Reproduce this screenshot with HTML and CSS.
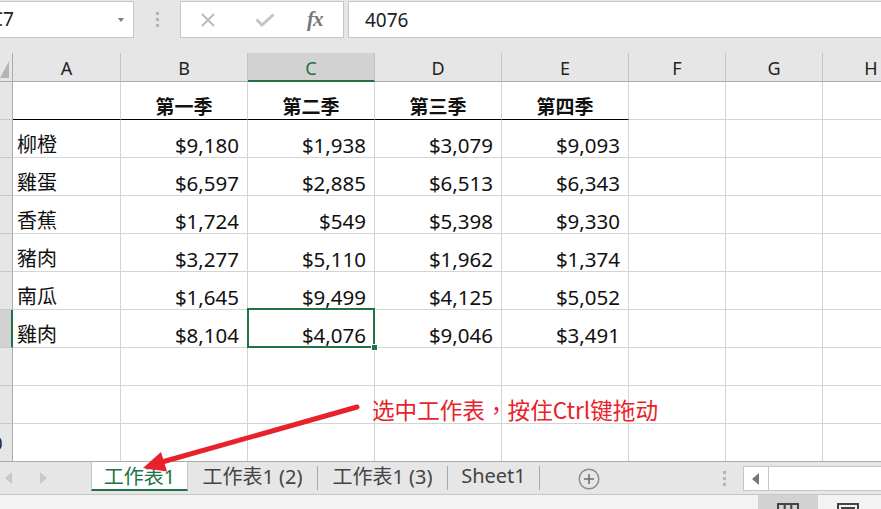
FILE: index.html
```html
<!DOCTYPE html>
<html lang="zh-Hant">
<head>
<meta charset="utf-8">
<title>Excel</title>
<link rel="stylesheet" href="styles.css">
</head>
<body>
<div class="app">
  <div class="formula-bar">
    <div class="namebox"><span class="nb-text">C7</span><span class="nb-caret"></span></div>
    <div class="grip"><i></i><i></i><i></i></div>
    <div class="fb-buttons">
      <svg class="ico-x" width="16" height="16" viewBox="0 0 16 16"><path d="M2 2 L14 14 M14 2 L2 14" stroke="#b9b9b9" stroke-width="1.8" fill="none"/></svg>
      <svg class="ico-check" width="20" height="14" viewBox="0 0 20 14"><path d="M1.5 6.5 L7 12 L18.5 1.5" stroke="#c4c4c4" stroke-width="3" fill="none"/></svg>
      <span class="fx">fx</span>
    </div>
    <div class="fb-input">4076</div>
  </div>

  <div class="sheet">
    <div class="corner"><span class="corner-tri"></span></div>
    <div class="ch">A</div><div class="ch">B</div><div class="ch ch-active">C</div><div class="ch">D</div><div class="ch">E</div><div class="ch">F</div><div class="ch">G</div><div class="ch">H</div>

    <div class="rh"></div>
    <div class="c c-hd"></div><div class="c c-hd c-b">第一季</div><div class="c c-hd c-b">第二季</div><div class="c c-hd c-b">第三季</div><div class="c c-hd c-b">第四季</div><div class="c"></div><div class="c"></div><div class="c"></div>

    <div class="rh"></div>
    <div class="c">柳橙</div><div class="c c-n">$9,180</div><div class="c c-n">$1,938</div><div class="c c-n">$3,079</div><div class="c c-n">$9,093</div><div class="c"></div><div class="c"></div><div class="c"></div>

    <div class="rh"></div>
    <div class="c">雞蛋</div><div class="c c-n">$6,597</div><div class="c c-n">$2,885</div><div class="c c-n">$6,513</div><div class="c c-n">$6,343</div><div class="c"></div><div class="c"></div><div class="c"></div>

    <div class="rh"></div>
    <div class="c">香蕉</div><div class="c c-n">$1,724</div><div class="c c-n">$549</div><div class="c c-n">$5,398</div><div class="c c-n">$9,330</div><div class="c"></div><div class="c"></div><div class="c"></div>

    <div class="rh"></div>
    <div class="c">豬肉</div><div class="c c-n">$3,277</div><div class="c c-n">$5,110</div><div class="c c-n">$1,962</div><div class="c c-n">$1,374</div><div class="c"></div><div class="c"></div><div class="c"></div>

    <div class="rh"></div>
    <div class="c">南瓜</div><div class="c c-n">$1,645</div><div class="c c-n">$9,499</div><div class="c c-n">$4,125</div><div class="c c-n">$5,052</div><div class="c"></div><div class="c"></div><div class="c"></div>

    <div class="rh rh-active"></div>
    <div class="c">雞肉</div><div class="c c-n">$8,104</div><div class="c c-n c-sel">$4,076<span class="sel"><span class="handle"></span></span></div><div class="c c-n">$9,046</div><div class="c c-n">$3,491</div><div class="c"></div><div class="c"></div><div class="c"></div>

    <div class="rh"></div>
    <div class="c"></div><div class="c"></div><div class="c"></div><div class="c"></div><div class="c"></div><div class="c"></div><div class="c"></div><div class="c"></div>

    <div class="rh"></div>
    <div class="c"></div><div class="c"></div><div class="c"></div><div class="c"></div><div class="c"></div><div class="c"></div><div class="c"></div><div class="c"></div>

    <div class="rh"><span class="rh-num">10</span></div>
    <div class="c"></div><div class="c"></div><div class="c"></div><div class="c"></div><div class="c"></div><div class="c"></div><div class="c"></div><div class="c"></div>
  </div>

  <div class="tabbar">
    <div class="tab-nav">
      <svg width="8" height="12" viewBox="0 0 8 12"><path d="M7 0 L0 6 L7 12 Z" fill="#c8c8c8"/></svg>
      <svg width="8" height="12" viewBox="0 0 8 12"><path d="M1 0 L8 6 L1 12 Z" fill="#c8c8c8"/></svg>
    </div>
    <div class="tab tab-active">工作表1</div>
    <div class="tab tab-w">工作表1 (2)</div><span class="tsep"></span>
    <div class="tab tab-w">工作表1 (3)</div><span class="tsep"></span>
    <div class="tab tab-s">Sheet1</div><span class="tsep"></span>
    <div class="add-sheet">
      <svg width="22" height="22" viewBox="0 0 22 22"><circle cx="11" cy="11" r="9.8" stroke="#8a8a8a" stroke-width="1.4" fill="none"/><path d="M11 6 V16 M6 11 H16" stroke="#6e6e6e" stroke-width="1.6"/></svg>
    </div>
    <div class="grip grip-tab"><i></i><i></i><i></i></div>
    <div class="hscroll">
      <div class="hs-btn"><svg width="7" height="12" viewBox="0 0 7 12"><path d="M7 0 L0 6 L7 12 Z" fill="#777"/></svg></div>
    </div>
  </div>

  <div class="statusbar">
    <div class="view-btn view-active">
      <svg width="22" height="14" viewBox="0 0 22 14"><rect x="1" y="1" width="20" height="12" fill="none" stroke="#444" stroke-width="2"/><path d="M7.7 1 V13 M14.3 1 V13 M1 7 H21" stroke="#444" stroke-width="2"/></svg>
    </div>
    <div class="view-btn">
      <svg width="22" height="14" viewBox="0 0 22 14"><rect x="1" y="1" width="20" height="13" fill="none" stroke="#444" stroke-width="2"/><rect x="5" y="5" width="12" height="9" fill="none" stroke="#444" stroke-width="2"/></svg>
    </div>
  </div>

  <div class="annotation">选中工作表，按住Ctrl键拖动</div>
  <svg class="arrow" width="881" height="509" viewBox="0 0 881 509">
    <path d="M357 407 L162 462" stroke="#e8222a" stroke-width="5" stroke-linecap="round" fill="none"/>
    <path d="M143 468 L167 471.5 L161 452 Z" fill="#e8222a"/>
  </svg>
</div>
</body>
</html>
```

FILE: styles.css
```css
* { box-sizing: border-box; }
html, body { margin: 0; padding: 0; }
body {
  width: 881px;
  height: 509px;
  overflow: hidden;
  background: #e6e6e6;
  font-family: "Noto Sans", "Noto Sans CJK TC", sans-serif;
  color: #111;
}
.app {
  position: relative;
  width: 881px;
  height: 509px;
  display: flex;
  flex-direction: column;
  overflow: hidden;
}

/* formula bar */
.formula-bar {
  height: 53px;
  flex: none;
  display: flex;
  align-items: flex-start;
  padding-top: 1px;
  background: #e6e6e6;
}
.namebox {
  width: 150px;
  margin-left: -16px;
  height: 37px;
  background: #fff;
  border: 1px solid #c6c6c6;
  display: flex;
  align-items: center;
  justify-content: space-between;
  padding: 0 9px 0 6px;
  font-size: 19px;
  line-height: 1;
}
.nb-text { color: #222; }
.nb-caret {
  width: 0; height: 0;
  border-left: 3.5px solid transparent;
  border-right: 3.5px solid transparent;
  border-top: 4px solid #7a7a7a;
}
.grip {
  width: 46px;
  height: 37px;
  display: flex;
  flex-direction: column;
  align-items: center;
  justify-content: center;
  gap: 3px;
}
.grip i {
  display: block;
  width: 3px;
  height: 3px;
  background: #b4b4b4;
}
.fb-buttons {
  width: 164px;
  height: 37px;
  background: #fff;
  border: 1px solid #c6c6c6;
  display: flex;
  align-items: center;
  padding-left: 19px;
}
.ico-x { margin-right: 39px; }
.ico-check { margin-right: 32px; margin-top: 1px; }
.fx {
  font-family: "Liberation Serif", serif;
  font-style: italic;
  font-size: 21px;
  color: #777;
  letter-spacing: -1px;
  font-weight: bold;
}
.fb-input {
  margin-left: 4px;
  flex: 1;
  height: 37px;
  background: #fff;
  border: 1px solid #c6c6c6;
  border-right: none;
  display: flex;
  align-items: center;
  padding-left: 16px;
  font-size: 19px;
  color: #222;
}

/* sheet */
.sheet {
  flex: none;
  width: 881px;
  height: 408px;
  overflow: hidden;
  display: grid;
  grid-template-columns: 13px 108px 127px 127px 127px 127px 97px 97px 97px;
  grid-template-rows: 29px repeat(10, 38px);
  background: #fff;
}
.corner {
  background: #e6e6e6;
  border-right: 1px solid #ababab;
  border-bottom: 1px solid #ababab;
  position: relative;
}
.corner-tri {
  position: absolute;
  right: 3px;
  bottom: 3px;
  width: 0; height: 0;
  border-left: 9px solid transparent;
  border-bottom: 17px solid #b4b4b4;
}
.ch {
  background: #e6e6e6;
  border-right: 1px solid #c4c4c4;
  border-bottom: 1px solid #ababab;
  display: flex;
  align-items: center;
  justify-content: center;
  font-size: 18px;
  color: #222;
  padding-top: 1px;
}
.ch-active {
  background: #d2d2d2;
  color: #217346;
  border-bottom: 2px solid #217346;
  padding-top: 2px;
}
.rh {
  background: #e6e6e6;
  border-right: 1px solid #ababab;
  border-bottom: 1px solid #c8c8c8;
  overflow: hidden;
  display: flex;
  align-items: center;
  font-size: 18px;
  color: #222;
}
.rh-active {
  background: #d2d2d2;
  border-right: 2px solid #217346;
}
.rh-num {
  margin-left: -18px;
  white-space: nowrap;
}
.c {
  border-right: 1px solid #d4d4d4;
  border-bottom: 1px solid #d4d4d4;
  display: flex;
  align-items: flex-end;
  padding: 0 4px 0 4px;
  font-size: 20px;
  line-height: 24px;
  white-space: nowrap;
  color: #111;
}
.c-hd { border-bottom-color: #000; }
.c-b {
  justify-content: center;
  font-weight: bold;
  font-size: 19px;
}
.c-n {
  justify-content: flex-end;
  padding-right: 8px;
  font-size: 20.5px;
}
.c-sel { position: relative; }
.sel {
  position: absolute;
  top: -2px;
  left: -1px;
  right: -1px;
  bottom: -1px;
  border: 2px solid #217346;
}
.handle {
  position: absolute;
  right: -5px;
  bottom: -5px;
  width: 7px;
  height: 7px;
  background: #217346;
  border: 1px solid #fff;
}

/* tab bar */
.tabbar {
  flex: none;
  height: 34px;
  border-top: 1px solid #ababab;
  border-bottom: 1px solid #c6c6c6;
  background: #e6e6e6;
  display: flex;
  align-items: flex-start;
}
.tab-nav {
  width: 91px;
  height: 32px;
  display: flex;
  align-items: center;
  padding-left: 5px;
  gap: 26px;
}
.tab {
  height: 29px;
  display: flex;
  align-items: center;
  justify-content: center;
  font-size: 20px;
  color: #444;
  white-space: nowrap;
  font-family: "Noto Sans", "Noto Sans CJK TC", sans-serif;
  padding-bottom: 3px;
}
.tab-active {
  width: 97px;
  background: #fff;
  color: #217346;
  border-left: 1px solid #c6c6c6;
  border-right: 1px solid #c6c6c6;
  border-bottom: 2px solid #217346;
  padding-bottom: 1px;
}
.tab-w { width: 129px; }
.tab-s { width: 91px; }
.tsep {
  width: 1px;
  height: 24px;
  margin-top: 4px;
  background: #a8a8a8;
}
.add-sheet {
  width: 98px;
  height: 32px;
  display: flex;
  align-items: center;
  justify-content: center;
  padding-top: 1px;
}
.grip-tab {
  width: 38px;
  height: 32px;
  margin-left: 67px;
  gap: 3px;
}
.grip-tab i { width: 3px; height: 3px; }
.hscroll {
  flex: 1;
  height: 25px;
  margin-top: 4px;
  background: #fff;
  border: 1px solid #c6c6c6;
  border-right: none;
  display: flex;
}
.hs-btn {
  width: 25px;
  border-right: 1px solid #c6c6c6;
  display: flex;
  align-items: center;
  justify-content: center;
  padding-right: 2px;
}

/* status bar */
.statusbar {
  flex: 1;
  background: #f3f3f3;
  display: flex;
  padding-left: 758px;
}
.view-btn {
  width: 60px;
  display: flex;
  justify-content: center;
  align-items: flex-start;
  padding-top: 8px;
}
.view-active { background: #d2d2d2; }

/* annotation overlay */
.annotation {
  position: absolute;
  left: 372px;
  top: 394px;
  font-family: "Noto Sans CJK SC", sans-serif;
  font-size: 22.6px;
  line-height: 32px;
  color: #e8222a;
  white-space: nowrap;
}
.arrow {
  position: absolute;
  left: 0;
  top: 0;
  pointer-events: none;
}
```
